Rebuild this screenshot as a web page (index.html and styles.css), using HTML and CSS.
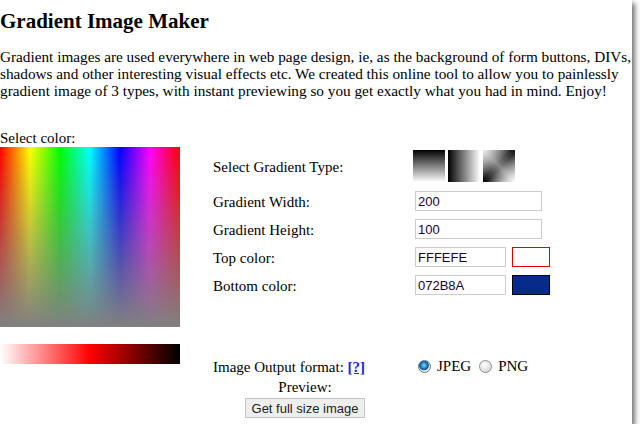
FILE: index.html
```html
<!DOCTYPE html>
<html>
<head>
<meta charset="utf-8">
<title>Gradient Image Maker</title>
<link rel="stylesheet" href="styles.css">
</head>
<body>
<div class="window">
  <div class="page">
    <h1 class="title">Gradient Image Maker</h1>
    <p class="intro">Gradient images are used everywhere in web page design, ie, as the background of form buttons, DIVs,<br>shadows and other interesting visual effects etc. We created this online tool to allow you to painlessly<br>gradient image of 3 types, with instant previewing so you get exactly what you had in mind. Enjoy!</p>
    <div class="tool">
      <div class="picker-col">
        <div class="picker-label">Select color:</div>
        <div class="spectrum"></div>
        <div class="shade"></div>
      </div>
      <div class="form-col">
        <div class="form-grid">
          <div class="lbl">Select Gradient Type:</div>
          <div class="types">
            <span class="type type-v"></span>
            <span class="type type-h"></span>
            <span class="type type-d"></span>
          </div>
          <div class="lbl">Gradient Width:</div>
          <div class="val"><input class="field field-wide" type="text" value="200"></div>
          <div class="lbl">Gradient Height:</div>
          <div class="val"><input class="field field-wide" type="text" value="100"></div>
          <div class="lbl">Top color:</div>
          <div class="val"><input class="field field-short" type="text" value="FFFEFE"><span class="swatch swatch-top"></span></div>
          <div class="lbl">Bottom color:</div>
          <div class="val"><input class="field field-short" type="text" value="072B8A"><span class="swatch swatch-bottom"></span></div>
        </div>
        <div class="output-row">
          <div class="output-label">Image Output format: <a class="help" href="#">[?]</a></div>
          <div class="output-opts">
            <label class="opt"><span class="radio radio-on"></span>JPEG</label>
            <label class="opt"><span class="radio"></span>PNG</label>
          </div>
        </div>
        <div class="preview">
          <div class="preview-label">Preview:</div>
          <button class="btn" type="button">Get full size image</button>
        </div>
      </div>
    </div>
  </div>
</div>
</body>
</html>
```
FILE: styles.css
```css
html, body {
  margin: 0;
  padding: 0;
  background: #ffffff;
}
.window {
  width: 632px;
  height: 424px;
  overflow: hidden;
  background: #ffffff;
  box-shadow: 3px 3px 5px rgba(0, 0, 0, 0.55);
}
.page {
  font-family: "Liberation Serif", "Times New Roman", serif;
  font-size: 15px;
  line-height: 17px;
  color: #000;
}
.title {
  margin: 9px 0 0;
  font-size: 21px;
  line-height: 24px;
  font-weight: bold;
}
.intro {
  margin: 15px 0 0;
  white-space: nowrap;
  font-size: 15.25px;
}
.tool {
  display: flex;
  margin-top: 31px;
}
.picker-col {
  width: 180px;
  flex: none;
}
.picker-label {
  height: 17px;
}
.spectrum {
  width: 180px;
  height: 180px;
  background:
    linear-gradient(to bottom, rgba(128,128,128,0) 0%, rgba(128,128,128,1) 100%),
    linear-gradient(to right, #ff0000 0%, #ffff00 16.67%, #00ff00 33.33%, #00ffff 50%, #0000ff 66.67%, #ff00ff 83.33%, #ff0000 100%);
}
.shade {
  width: 180px;
  height: 20px;
  margin-top: 17px;
  background: linear-gradient(to right, #ffffff 0%, #ff0000 50%, #000000 100%);
}
.form-col {
  margin-left: 33px;
  padding-top: 20px;
}
.form-grid {
  display: grid;
  grid-template-columns: 200px auto;
  grid-template-rows: 33px 20px 20px 20px 20px;
  row-gap: 8px;
  align-items: center;
}
.lbl {
  padding-top: 2px;
}
.types {
  align-self: start;
  display: flex;
  gap: 3px;
}
.type {
  display: block;
  width: 32px;
  height: 32px;
}
.type-v { background: linear-gradient(to bottom, #000 0%, #fff 100%); }
.type-h { background: linear-gradient(to right, #000 0%, #fff 100%); }
.type-d {
  background:
    linear-gradient(to bottom right, rgba(255,255,255,0.85) 0%, rgba(255,255,255,0) 45%, rgba(255,255,255,0) 55%, rgba(255,255,255,1) 100%),
    linear-gradient(to top right, #000 0%, #888 50%, #111 100%);
}
.val {
  display: flex;
  align-items: center;
  gap: 6px;
  padding-left: 2px;
}
.field {
  box-sizing: border-box;
  height: 20px;
  margin: 0;
  padding: 0 2px;
  border: 1px solid #cccccc;
  font-family: "Liberation Sans", Arial, sans-serif;
  font-size: 13px;
  color: #220033;
  background: #fff;
  outline: none;
}
.field-wide { width: 127px; }
.field-short { width: 91px; }
.swatch {
  box-sizing: border-box;
  display: block;
  width: 38px;
  height: 20px;
}
.swatch-top { border: 1px solid #e00000; background: #fffefe; }
.swatch-bottom { border: 1px solid #000; background: #072b8a; }
.output-row {
  display: flex;
  margin-top: 64px;
  height: 17px;
}
.output-label {
  width: 200px;
}
.help {
  color: #2222dd;
  font-weight: bold;
  text-decoration: underline;
}
.output-opts {
  display: flex;
  align-items: center;
  padding-left: 5px;
  gap: 8px;
  margin-top: -3px;
}
.opt {
  display: flex;
  align-items: center;
  gap: 6px;
}
.radio {
  box-sizing: border-box;
  display: block;
  width: 13px;
  height: 13px;
  border-radius: 50%;
  border: 1px solid #8f8f8f;
  background: radial-gradient(circle at 40% 35%, #ffffff 0%, #dcdcdc 70%, #c8c8c8 100%);
}
.radio-on {
  border-color: #5a7a93;
  background: radial-gradient(circle at 45% 40%, #8fd3ff 0%, #1e7fc0 35%, #0d4d7a 50%, #e4e4e4 58%, #f4f4f4 100%);
}
.preview {
  width: 184px;
  text-align: center;
  margin-top: 3px;
}
.preview-label {
  height: 19px;
}
.btn {
  box-sizing: border-box;
  height: 20px;
  margin: 0;
  padding: 0 6px;
  border: 1px solid #c4c4c4;
  background: #eeeeee;
  font-family: "Liberation Sans", Arial, sans-serif;
  font-size: 13px;
  color: #222;
}
```
